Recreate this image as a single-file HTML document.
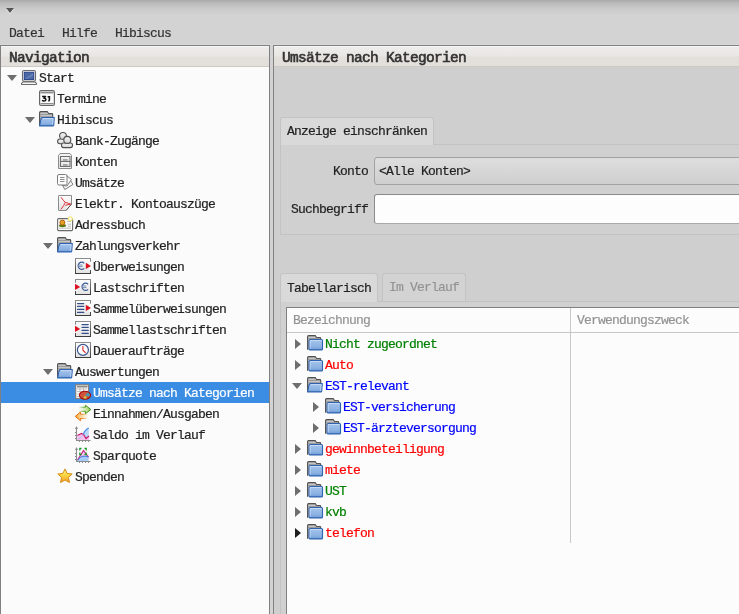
<!DOCTYPE html><html><head><meta charset="utf-8"><style>
*{margin:0;padding:0;box-sizing:border-box}
html,body{width:739px;height:614px;overflow:hidden}
body{position:relative;background:#d3d3d3;font-family:"Liberation Mono",monospace;font-size:13px;letter-spacing:-0.8px;color:#222;-webkit-text-stroke:0.2px currentColor}
.a{position:absolute}
.t{position:absolute;white-space:pre;line-height:21px;height:21px;will-change:transform}
.hd{position:absolute;white-space:pre;font-weight:normal;font-size:14.5px;letter-spacing:-0.7px;color:#333;line-height:20px;-webkit-text-stroke:0.6px #333;will-change:transform}
</style></head><body>
<svg width="0" height="0" style="position:absolute"><defs>
<linearGradient id="gb" x1="0" y1="0" x2="0" y2="1"><stop offset="0" stop-color="#a4c4ec"/><stop offset=".7" stop-color="#8cb2e2"/><stop offset="1" stop-color="#6a9ad6"/></linearGradient>
<linearGradient id="gw" x1="0" y1="0" x2="0" y2="1"><stop offset="0" stop-color="#fdfdfd"/><stop offset="1" stop-color="#e2e2e2"/></linearGradient>
<linearGradient id="gg" x1="0" y1="0" x2="1" y2="0"><stop offset="0" stop-color="#e8f4d0" stop-opacity=".2"/><stop offset="1" stop-color="#8cc83c"/></linearGradient>
<linearGradient id="go" x1="1" y1="0" x2="0" y2="0"><stop offset="0" stop-color="#fbe0a0" stop-opacity=".2"/><stop offset="1" stop-color="#f4a020"/></linearGradient>
<linearGradient id="gp" x1="0" y1="0" x2="0" y2="1"><stop offset="0" stop-color="#f6f6f6"/><stop offset="1" stop-color="#d4d4d4"/></linearGradient>
<linearGradient id="gbx" x1="0" y1="0" x2="0" y2="1"><stop offset="0" stop-color="#8c8c8c"/><stop offset="1" stop-color="#3c3c3c"/></linearGradient>
<linearGradient id="ggs" x1="0" y1="0" x2="1" y2="0"><stop offset="0" stop-color="#4a9a1a" stop-opacity="0"/><stop offset=".5" stop-color="#4a9a1a"/><stop offset="1" stop-color="#3a8a12"/></linearGradient>
<linearGradient id="gos" x1="1" y1="0" x2="0" y2="0"><stop offset="0" stop-color="#e87010" stop-opacity="0"/><stop offset=".5" stop-color="#e87010"/><stop offset="1" stop-color="#e06a10"/></linearGradient>
<linearGradient id="gs" x1="0" y1="0" x2="0" y2="1"><stop offset="0" stop-color="#fff6a0"/><stop offset=".45" stop-color="#fcd840"/><stop offset="1" stop-color="#f39a30"/></linearGradient>
</defs></svg>

<div class="a" style="left:0;top:0;width:739px;height:24px;background:linear-gradient(#a9a9a9 0,#bababa 3px,#cbcbcb 9px,#d3d3d3 15px)"></div>
<svg class="a" style="left:0;top:0" width="20" height="20"><path d="M6 9h8l-4 5z" fill="#fff" opacity=".8"/><path d="M6 8h8l-4 5z" fill="#555"/></svg>
<div class="t" style="left:9px;top:23px;color:#333">Datei</div>
<div class="t" style="left:62px;top:23px;color:#333">Hilfe</div>
<div class="t" style="left:115px;top:23px;color:#333">Hibiscus</div>
<div class="a" style="left:0;top:44px;width:739px;height:1px;background:#dadada"></div>
<div class="a" style="left:0;top:45px;width:270px;height:569px;border:1px solid #808080;border-bottom:none;background:#fbfbfb"></div>
<div class="a" style="left:1px;top:46px;width:268px;height:21px;background:linear-gradient(#f7f6f5 0,#f7f6f5 1px,#eeedeb 1px,#e9e6e3 10px,#e3e0dc 11px,#e3e0dc 20px);border-bottom:1px solid #cdc9c5"></div>
<div class="hd" style="left:9px;top:48px">Navigation</div>
<div class="a" style="left:273px;top:45px;width:470px;height:569px;border:1px solid #808080;border-bottom:none;border-right:none;background:#cfcfcf"></div>
<div class="a" style="left:274px;top:46px;width:465px;height:21px;background:linear-gradient(#f7f6f5 0,#f7f6f5 1px,#eeedeb 1px,#e9e6e3 10px,#e3e0dc 11px,#e3e0dc 20px);border-bottom:1px solid #cdc9c5"></div>
<div class="hd" style="left:282px;top:48px">Umsätze nach Kategorien</div>
<div class="a" style="left:1px;top:382px;width:268px;height:21px;background:#3a8de3"></div>
<svg class="a" style="left:7px;top:75px" width="10" height="6"><path d="M0 0h10l-5 6z" fill="#6e6e6e"/></svg>
<svg class="a" style="left:21px;top:69px;overflow:visible" width="16" height="16" viewBox="0 0 16 16"><rect x="1.5" y="1.5" width="13" height="10.8" rx="1.5" fill="#f8f8f8" stroke="#6c6c6c" stroke-width="1.1"/><rect x="3.2" y="3.2" width="9.6" height="7.4" fill="#4d68a6" stroke="#1e3a82" stroke-width=".9"/><path d="M4 9.8L12.2 4.2V6.5L6.5 9.8Z" fill="#7088bc" opacity=".8"/><path d="M2.2 12.9H13.8L15.5 14.4Q15.8 15.5 14.7 15.5H1.3Q0.2 15.5 0.5 14.4Z" fill="#f8f8f8" stroke="#6c6c6c" stroke-width="1.1" stroke-linejoin="round"/></svg>
<div class="t" style="left:39px;top:68px;color:#222">Start</div>
<svg class="a" style="left:39px;top:90px;overflow:visible" width="16" height="16" viewBox="0 0 16 16"><rect x="0.6" y="0.6" width="14.8" height="14.8" rx="1.5" fill="#fdfdfd" stroke="#666" stroke-width="1.2"/><rect x="1.5" y="1.8" width="13" height="1.6" fill="#8c8c8c"/><rect x="1.5" y="13" width="13" height="1.1" fill="#8c8c8c"/><path d="M3.1 6.6H6.5L4.9 8.3Q6.9 8.2 6.9 9.7Q6.9 11 5 11Q3.8 11 3 10.4" fill="none" stroke="#111" stroke-width="1.5" stroke-linejoin="round"/><path d="M8.6 6.8H10.4V10.1Q10.4 10.9 9.3 10.9" fill="none" stroke="#111" stroke-width="1.6"/></svg>
<div class="t" style="left:57px;top:89px;color:#222">Termine</div>
<svg class="a" style="left:25px;top:117px" width="10" height="6"><path d="M0 0h10l-5 6z" fill="#6e6e6e"/></svg>
<svg class="a" style="left:39px;top:111px;overflow:visible" width="16" height="16" viewBox="0 0 16 16"><path d="M0.6 14.8V1.6Q0.6 0.6 1.6 0.6H8.2L9.6 2.5H12.8Q13.7 2.5 13.7 3.4V7" fill="#a8a8a8" stroke="#505050" stroke-width="1.1"/><path d="M1.4 2.3h7.2M1.4 4.4h11.6M1.4 6.2h11.6" stroke="#d8d8d8" stroke-width="0.9"/><path d="M1.4 3.4h11.6M1.4 5.3h11.6" stroke="#8c8c8c" stroke-width="0.6"/><path d="M2.9 6.5H15.3L14.7 14.2Q14.6 14.9 13.9 14.9H0.6Q1.3 12 1.9 8.5Z" fill="url(#gb)" stroke="#2f62b0" stroke-width="1.1" stroke-linejoin="round"/><path d="M3.8 7.6H14.1L13.6 13.8" fill="none" stroke="#cfe0f6" stroke-width=".8"/></svg>
<div class="t" style="left:57px;top:110px;color:#222">Hibiscus</div>
<svg class="a" style="left:57px;top:132px;overflow:visible" width="16" height="16" viewBox="0 0 16 16"><rect x="0.6" y="7" width="9" height="4.8" rx="2.2" fill="url(#gp)" stroke="#4e4e4e" stroke-width="1.1"/><circle cx="6" cy="3.9" r="3.4" fill="url(#gp)" stroke="#4e4e4e" stroke-width="1.1"/><rect x="4.5" y="11" width="11" height="4.6" rx="2" fill="url(#gp)" stroke="#4e4e4e" stroke-width="1.1"/><circle cx="10.3" cy="7.9" r="3.5" fill="url(#gp)" stroke="#4e4e4e" stroke-width="1.1"/></svg>
<div class="t" style="left:75px;top:131px;color:#222">Bank-Zugänge</div>
<svg class="a" style="left:57px;top:153px;overflow:visible" width="16" height="16" viewBox="0 0 16 16"><path d="M1.5 15.5V2.5L3 0.5H13L14.5 2.5V15.5Z" fill="url(#gp)" stroke="#8a8a8a"/><path d="M2.5 14.5h11" stroke="#f4f4f4"/><rect x="3.5" y="3.5" width="9.5" height="5" fill="url(#gp)" stroke="#6e6e6e"/><rect x="3.5" y="8.5" width="9.5" height="5" fill="url(#gp)" stroke="#6e6e6e"/><path d="M5.5 5.6Q8 7.2 10.8 5.6M5.5 10.6Q8 12.2 10.8 10.6" fill="none" stroke="#fafafa" stroke-width="1.1"/><path d="M6 6.9h4.5M6 11.9h4.5" stroke="#5a5a5a" stroke-width=".9"/></svg>
<div class="t" style="left:75px;top:152px;color:#222">Konten</div>
<svg class="a" style="left:57px;top:174px;overflow:visible" width="16" height="16" viewBox="0 0 16 16"><path d="M5.5 11L7.8 15.5L16 10.5L13.5 6.5" fill="#f8f8f8" stroke="#7c7c7c" stroke-linejoin="round"/><path d="M9.5 1.5L14.5 5.5L10 12L5 11.5" fill="#f8f8f8" stroke="#7c7c7c" stroke-linejoin="round"/><rect x="0.5" y="0.5" width="9.5" height="10.5" rx="1.5" fill="#fdfdfd" stroke="#7c7c7c"/><path d="M3 3.5h4.5M3 5.5h4.5M3 7.5h4.5" stroke="#8c8c8c"/></svg>
<div class="t" style="left:75px;top:173px;color:#222">Umsätze</div>
<svg class="a" style="left:57px;top:195px;overflow:visible" width="16" height="16" viewBox="0 0 16 16"><path d="M2 .5H14.5V9L9 15.5H2Q1.5 15.5 1.5 15V1Q1.5 .5 2 .5Z" fill="url(#gw)" stroke="#8a8a8a"/><path d="M14.5 9L9.8 10.2L9 15.5Z" fill="#f8f8f8"/><path d="M14.5 9L9 15.5" stroke="#444" stroke-width=".9"/><path d="M4 2.2Q6 5.5 8.3 7.3L14 9.2M8.3 7.3Q7 10.5 4 14.3M8.3 10.3L13.5 9.2" fill="none" stroke="#d8202a" stroke-width=".9"/><path d="M5.2 2.8L6.2 4.6" stroke="#f4a0a0" stroke-width=".8"/></svg>
<div class="t" style="left:75px;top:194px;color:#222">Elektr. Kontoauszüge</div>
<svg class="a" style="left:57px;top:216px;overflow:visible" width="16" height="16" viewBox="0 0 16 16"><rect x="0.6" y="2.6" width="15" height="12" rx="1" fill="#fdfdfd" stroke="#6a6a6a" stroke-width="1.1"/><ellipse cx="5.5" cy="9.6" rx="3.6" ry="1.7" fill="#5a7a10"/><circle cx="5.4" cy="6.6" r="2.5" fill="#e0a020" stroke="#b85e10" stroke-width="1"/><path d="M9.8 5.5h4M10.5 8.2h3.5M10.5 10.2h3.5M2 12.2h12" stroke="#b8b8b8" stroke-width=".9"/><circle cx="13.3" cy="2.8" r="2" fill="#fffde8" stroke="#f2e27a" stroke-width="1.1"/></svg>
<div class="t" style="left:75px;top:215px;color:#222">Adressbuch</div>
<svg class="a" style="left:43px;top:243px" width="10" height="6"><path d="M0 0h10l-5 6z" fill="#6e6e6e"/></svg>
<svg class="a" style="left:57px;top:237px;overflow:visible" width="16" height="16" viewBox="0 0 16 16"><path d="M0.6 14.8V1.6Q0.6 0.6 1.6 0.6H8.2L9.6 2.5H12.8Q13.7 2.5 13.7 3.4V7" fill="#a8a8a8" stroke="#505050" stroke-width="1.1"/><path d="M1.4 2.3h7.2M1.4 4.4h11.6M1.4 6.2h11.6" stroke="#d8d8d8" stroke-width="0.9"/><path d="M1.4 3.4h11.6M1.4 5.3h11.6" stroke="#8c8c8c" stroke-width="0.6"/><path d="M2.9 6.5H15.3L14.7 14.2Q14.6 14.9 13.9 14.9H0.6Q1.3 12 1.9 8.5Z" fill="url(#gb)" stroke="#2f62b0" stroke-width="1.1" stroke-linejoin="round"/><path d="M3.8 7.6H14.1L13.6 13.8" fill="none" stroke="#cfe0f6" stroke-width=".8"/></svg>
<div class="t" style="left:75px;top:236px;color:#222">Zahlungsverkehr</div>
<svg class="a" style="left:75px;top:258px;overflow:visible" width="16" height="16" viewBox="0 0 16 16"><rect x="0.5" y="0.5" width="15" height="15" fill="url(#gw)" stroke="url(#gbx)"/><rect x="14" y="3.6" width="3" height="8.4" fill="#fbfbfb"/><path d="M9.2 5.3A3.5 3.6 0 1 0 9.2 10.3" fill="none" stroke="#3a5a95" stroke-width="1.2"/><path d="M3.3 7h4.2M3.3 8.6h4.2" stroke="#5a78aa" stroke-width=".8"/><path d="M10.8 4.7L16.0 7.9L10.8 11Z" fill="#dc1020"/></svg>
<div class="t" style="left:93px;top:257px;color:#222">Überweisungen</div>
<svg class="a" style="left:75px;top:279px;overflow:visible" width="16" height="16" viewBox="0 0 16 16"><rect x="0.5" y="0.5" width="15" height="15" fill="url(#gw)" stroke="url(#gbx)"/><rect x="-1" y="3.6" width="3" height="8.4" fill="#fbfbfb"/><path d="M0 4.7L5.2 7.9L0 11Z" fill="#dc1020"/><path d="M13.1 5.3A3.5 3.6 0 1 0 13.1 10.3" fill="none" stroke="#3a5a95" stroke-width="1.2"/><path d="M7.2 7h4.2M7.2 8.6h4.2" stroke="#5a78aa" stroke-width=".8"/></svg>
<div class="t" style="left:93px;top:278px;color:#222">Lastschriften</div>
<svg class="a" style="left:75px;top:300px;overflow:visible" width="16" height="16" viewBox="0 0 16 16"><rect x="0.5" y="0.5" width="15" height="15" fill="url(#gw)" stroke="url(#gbx)"/><rect x="14" y="3.6" width="3" height="8.4" fill="#fbfbfb"/><path d="M2.5 3.6h6.3M2.5 6.4h6.3M2.5 9.4h6.3M2.5 12.4h6.3" stroke="#34508a" stroke-width="1.1" stroke-linecap="round"/><path d="M10.8 4.7L16.0 7.9L10.8 11Z" fill="#dc1020"/></svg>
<div class="t" style="left:93px;top:299px;color:#222">Sammelüberweisungen</div>
<svg class="a" style="left:75px;top:321px;overflow:visible" width="16" height="16" viewBox="0 0 16 16"><rect x="0.5" y="0.5" width="15" height="15" fill="url(#gw)" stroke="url(#gbx)"/><rect x="-1" y="3.6" width="3" height="8.4" fill="#fbfbfb"/><path d="M0 4.7L5.2 7.9L0 11Z" fill="#dc1020"/><path d="M7 3.6h6.3M7 6.4h6.3M7 9.4h6.3M7 12.4h6.3" stroke="#34508a" stroke-width="1.1" stroke-linecap="round"/></svg>
<div class="t" style="left:93px;top:320px;color:#222">Sammellastschriften</div>
<svg class="a" style="left:75px;top:342px;overflow:visible" width="16" height="16" viewBox="0 0 16 16"><rect x="0.5" y="0.5" width="15" height="15" fill="url(#gw)" stroke="url(#gbx)"/><circle cx="7.9" cy="7.9" r="5.5" fill="#fdfdfd" stroke="#3a5590" stroke-width="1.2"/><path d="M7.9 4V8.2L10.6 10.9" fill="none" stroke="#e02a2a" stroke-width="1.1"/></svg>
<div class="t" style="left:93px;top:341px;color:#222">Daueraufträge</div>
<svg class="a" style="left:43px;top:369px" width="10" height="6"><path d="M0 0h10l-5 6z" fill="#6e6e6e"/></svg>
<svg class="a" style="left:57px;top:363px;overflow:visible" width="16" height="16" viewBox="0 0 16 16"><path d="M0.6 14.8V1.6Q0.6 0.6 1.6 0.6H8.2L9.6 2.5H12.8Q13.7 2.5 13.7 3.4V7" fill="#a8a8a8" stroke="#505050" stroke-width="1.1"/><path d="M1.4 2.3h7.2M1.4 4.4h11.6M1.4 6.2h11.6" stroke="#d8d8d8" stroke-width="0.9"/><path d="M1.4 3.4h11.6M1.4 5.3h11.6" stroke="#8c8c8c" stroke-width="0.6"/><path d="M2.9 6.5H15.3L14.7 14.2Q14.6 14.9 13.9 14.9H0.6Q1.3 12 1.9 8.5Z" fill="url(#gb)" stroke="#2f62b0" stroke-width="1.1" stroke-linejoin="round"/><path d="M3.8 7.6H14.1L13.6 13.8" fill="none" stroke="#cfe0f6" stroke-width=".8"/></svg>
<div class="t" style="left:75px;top:362px;color:#222">Auswertungen</div>
<svg class="a" style="left:75px;top:384px;overflow:visible" width="16" height="16" viewBox="0 0 16 16"><rect x="0.8" y="0.8" width="12.6" height="13.6" fill="#fff" stroke="#8a7a6a" stroke-width="1"/><path d="M2 2.6h10.5" stroke="#8a8a8a" stroke-width="1.8"/><path d="M2 5h10M2 7.5h10M2 10h10M2 12.5h10M5 3v10.5M8.5 3v10.5" stroke="#b8b8b8" stroke-width=".9"/><ellipse cx="10" cy="11.2" rx="5.6" ry="3.9" fill="#d0553a" stroke="#a80808" stroke-width="1.1"/><path d="M10 11.2L13 8.5L15 10.5L14 12.5Z" fill="#3aa0c0"/><path d="M10 11.2L8.3 14.6H12.2Z" fill="#c8d040"/></svg>
<div class="t" style="left:93px;top:383px;color:#fff">Umsätze nach Kategorien</div>
<svg class="a" style="left:75px;top:405px;overflow:visible" width="16" height="16" viewBox="0 0 16 16"><path d="M3.8 2.2H10.4V0.2L15.8 4.5L10.4 8.8V6.4H3.8Z" fill="url(#gg)" stroke="url(#ggs)" stroke-width="1"/><path d="M12.4 9.2H5.4V7.1L0.2 11.4L5.4 15.7V13.6H12.4Z" fill="url(#go)" stroke="url(#gos)" stroke-width="1"/></svg>
<div class="t" style="left:93px;top:404px;color:#222">Einnahmen/Ausgaben</div>
<svg class="a" style="left:75px;top:426px;overflow:visible" width="16" height="16" viewBox="0 0 16 16"><path d="M1.5 1V14.5H15.5" fill="none" stroke="#8c8c8c" stroke-width="1.1"/><path d="M0 3L1.5 0L3 3Z" fill="#8c8c8c"/><path d="M0 6.5h1.5M0 9.5h1.5M0 12.5h1.5M4.5 14.5v1.5M7.5 14.5v1.5M10.5 14.5v1.5M13.5 14.5v1.5" stroke="#8c8c8c"/><path d="M2.2 14V9.5L6.5 7.5L8.5 8.5L11 12.5L14 10V14Z" fill="#f6c0ec"/><path d="M8.3 8.3Q10 3.5 13.8 2V10L11 12.5Z" fill="#b8d6f8"/><path d="M2.4 9.5L6.5 7.5L8.5 8.5L11 12.5L14 10" fill="none" stroke="#c81e70" stroke-width="1.2"/><path d="M8.3 8.3Q10 3.5 13.8 2" fill="none" stroke="#4a8ae8" stroke-width="1.1"/><path d="M2.5 13L6 11.5L8.5 8.5" fill="none" stroke="#a8b8f0" stroke-width=".8"/></svg>
<div class="t" style="left:93px;top:425px;color:#222">Saldo im Verlauf</div>
<svg class="a" style="left:75px;top:447px;overflow:visible" width="16" height="16" viewBox="0 0 16 16"><path d="M1.5 1V14.5H15.5" fill="none" stroke="#8c8c8c" stroke-width="1.1"/><path d="M0 3L1.5 0L3 3Z" fill="#8c8c8c"/><path d="M0 6.5h1.5M0 9.5h1.5M0 12.5h1.5M4.5 14.5v1.5M7.5 14.5v1.5M10.5 14.5v1.5M13.5 14.5v1.5" stroke="#8c8c8c"/><path d="M2.5 13.5L8.5 3.5L13.5 10V14H2.5Z" fill="#f6c4ec"/><path d="M2.5 13.5Q5.5 9.5 8 9.2Q11 9 13.5 10V14H2.5Z" fill="#a8ccf8"/><path d="M2.5 13L8.5 3.5L13.5 10" fill="none" stroke="#c81e80" stroke-width="1.1"/><path d="M2.5 13.2Q5.5 9.5 8 9.2Q11 9 13.5 10" fill="none" stroke="#3a7ee8" stroke-width="1"/><path d="M4.8 3.5V1.5H6.5M9.5 1.5H11.2V3.5M4.8 5.5V7.5H6.5M9.5 7.5H11.2V5.5" fill="none" stroke="#1a9a2a" stroke-width="1.3"/></svg>
<div class="t" style="left:93px;top:446px;color:#222">Sparquote</div>
<svg class="a" style="left:57px;top:468px;overflow:visible" width="16" height="16" viewBox="0 0 16 16"><path d="M8 0.9L10.1 5.4L15.2 6L11.4 9.4L12.5 14.5L8 12L3.5 14.5L4.6 9.4L0.8 6L5.9 5.4Z" fill="url(#gs)" stroke="#d88a10" stroke-width="1" stroke-linejoin="round"/></svg>
<div class="t" style="left:75px;top:467px;color:#222">Spenden</div>
<div class="a" style="left:280px;top:144px;width:470px;height:91px;border:1px solid #c3c3c3;background:#d0d0d0"></div>
<div class="a" style="left:280px;top:117px;width:154px;height:28px;background:#d9d9d9;border:1px solid #c3c3c3;border-bottom:none;border-radius:3px 3px 0 0"></div>
<div class="t" style="left:287px;top:121px">Anzeige einschränken</div>
<div class="t" style="left:333px;top:161px">Konto</div>
<div class="a" style="left:374px;top:157px;width:380px;height:28px;border:1px solid #a2a2a2;border-radius:3px;background:linear-gradient(#dedede,#cfcfcf)"></div>
<div class="t" style="left:379px;top:161px">&lt;Alle Konten&gt;</div>
<div class="t" style="left:291px;top:199px">Suchbegriff</div>
<div class="a" style="left:374px;top:194px;width:380px;height:30px;border:1px solid #8a8a8a;border-bottom-color:#a8a8a8;border-radius:3px;background:#fdfdfd"></div>
<div class="a" style="left:280px;top:301px;width:470px;height:320px;border:1px solid #c3c3c3;background:#d0d0d0"></div>
<div class="a" style="left:280px;top:273px;width:98px;height:29px;background:#d9d9d9;border:1px solid #c3c3c3;border-bottom:none;border-radius:3px 3px 0 0"></div>
<div class="t" style="left:287px;top:278px">Tabellarisch</div>
<div class="a" style="left:382px;top:273px;width:84px;height:28px;background:#d3d3d3;border:1px solid #c3c3c3;border-bottom:none;border-radius:3px 3px 0 0"></div>
<div class="t" style="left:389px;top:277px;color:#939393">Im Verlauf</div>
<div class="a" style="left:286px;top:307px;width:460px;height:320px;border:1px solid #808080;background:#fcfcfc"></div>
<div class="a" style="left:287px;top:332px;width:460px;height:1px;background:#c8c8c8"></div>
<div class="a" style="left:570px;top:308px;width:1px;height:235px;background:#c8c8c8"></div>
<div class="t" style="left:293px;top:310px;color:#939393">Bezeichnung</div>
<div class="t" style="left:577px;top:310px;color:#939393">Verwendungszweck</div>
<svg class="a" style="left:295px;top:339px" width="6" height="10"><path d="M0 0v10l6-5z" fill="#6e6e6e"/></svg>
<svg class="a" style="left:307px;top:335px;overflow:visible" width="16" height="16" viewBox="0 0 16 16"><path d="M0.6 14.8V1.6Q0.6 0.6 1.6 0.6H8.2L9.6 2.5H12.8Q13.7 2.5 13.7 3.4V7" fill="#a8a8a8" stroke="#505050" stroke-width="1.1"/><path d="M1.4 2.3h7.2M1.4 4.4h11.6M1.4 6.2h11.6" stroke="#d8d8d8" stroke-width="0.9"/><path d="M1.4 3.4h11.6M1.4 5.3h11.6" stroke="#8c8c8c" stroke-width="0.6"/><rect x="2.1" y="4.5" width="13.4" height="10.4" rx="1" fill="url(#gb)" stroke="#3063b0" stroke-width="1.1"/><path d="M3.1 13.6V5.5H14.5" fill="none" stroke="#cfe0f6" stroke-width=".8"/></svg>
<div class="t" style="left:325px;top:334px;color:#008000">Nicht zugeordnet</div>
<svg class="a" style="left:295px;top:360px" width="6" height="10"><path d="M0 0v10l6-5z" fill="#6e6e6e"/></svg>
<svg class="a" style="left:307px;top:356px;overflow:visible" width="16" height="16" viewBox="0 0 16 16"><path d="M0.6 14.8V1.6Q0.6 0.6 1.6 0.6H8.2L9.6 2.5H12.8Q13.7 2.5 13.7 3.4V7" fill="#a8a8a8" stroke="#505050" stroke-width="1.1"/><path d="M1.4 2.3h7.2M1.4 4.4h11.6M1.4 6.2h11.6" stroke="#d8d8d8" stroke-width="0.9"/><path d="M1.4 3.4h11.6M1.4 5.3h11.6" stroke="#8c8c8c" stroke-width="0.6"/><rect x="2.1" y="4.5" width="13.4" height="10.4" rx="1" fill="url(#gb)" stroke="#3063b0" stroke-width="1.1"/><path d="M3.1 13.6V5.5H14.5" fill="none" stroke="#cfe0f6" stroke-width=".8"/></svg>
<div class="t" style="left:325px;top:355px;color:#ff0000">Auto</div>
<svg class="a" style="left:292px;top:383px" width="10" height="6"><path d="M0 0h10l-5 6z" fill="#6e6e6e"/></svg>
<svg class="a" style="left:307px;top:377px;overflow:visible" width="16" height="16" viewBox="0 0 16 16"><path d="M0.6 14.8V1.6Q0.6 0.6 1.6 0.6H8.2L9.6 2.5H12.8Q13.7 2.5 13.7 3.4V7" fill="#a8a8a8" stroke="#505050" stroke-width="1.1"/><path d="M1.4 2.3h7.2M1.4 4.4h11.6M1.4 6.2h11.6" stroke="#d8d8d8" stroke-width="0.9"/><path d="M1.4 3.4h11.6M1.4 5.3h11.6" stroke="#8c8c8c" stroke-width="0.6"/><path d="M2.9 6.5H15.3L14.7 14.2Q14.6 14.9 13.9 14.9H0.6Q1.3 12 1.9 8.5Z" fill="url(#gb)" stroke="#2f62b0" stroke-width="1.1" stroke-linejoin="round"/><path d="M3.8 7.6H14.1L13.6 13.8" fill="none" stroke="#cfe0f6" stroke-width=".8"/></svg>
<div class="t" style="left:325px;top:376px;color:#0000ff">EST-relevant</div>
<svg class="a" style="left:313px;top:402px" width="6" height="10"><path d="M0 0v10l6-5z" fill="#6e6e6e"/></svg>
<svg class="a" style="left:325px;top:398px;overflow:visible" width="16" height="16" viewBox="0 0 16 16"><path d="M0.6 14.8V1.6Q0.6 0.6 1.6 0.6H8.2L9.6 2.5H12.8Q13.7 2.5 13.7 3.4V7" fill="#a8a8a8" stroke="#505050" stroke-width="1.1"/><path d="M1.4 2.3h7.2M1.4 4.4h11.6M1.4 6.2h11.6" stroke="#d8d8d8" stroke-width="0.9"/><path d="M1.4 3.4h11.6M1.4 5.3h11.6" stroke="#8c8c8c" stroke-width="0.6"/><rect x="2.1" y="4.5" width="13.4" height="10.4" rx="1" fill="url(#gb)" stroke="#3063b0" stroke-width="1.1"/><path d="M3.1 13.6V5.5H14.5" fill="none" stroke="#cfe0f6" stroke-width=".8"/></svg>
<div class="t" style="left:343px;top:397px;color:#0000ff">EST-versicherung</div>
<svg class="a" style="left:313px;top:423px" width="6" height="10"><path d="M0 0v10l6-5z" fill="#6e6e6e"/></svg>
<svg class="a" style="left:325px;top:419px;overflow:visible" width="16" height="16" viewBox="0 0 16 16"><path d="M0.6 14.8V1.6Q0.6 0.6 1.6 0.6H8.2L9.6 2.5H12.8Q13.7 2.5 13.7 3.4V7" fill="#a8a8a8" stroke="#505050" stroke-width="1.1"/><path d="M1.4 2.3h7.2M1.4 4.4h11.6M1.4 6.2h11.6" stroke="#d8d8d8" stroke-width="0.9"/><path d="M1.4 3.4h11.6M1.4 5.3h11.6" stroke="#8c8c8c" stroke-width="0.6"/><rect x="2.1" y="4.5" width="13.4" height="10.4" rx="1" fill="url(#gb)" stroke="#3063b0" stroke-width="1.1"/><path d="M3.1 13.6V5.5H14.5" fill="none" stroke="#cfe0f6" stroke-width=".8"/></svg>
<div class="t" style="left:343px;top:418px;color:#0000ff">EST-ärzteversorgung</div>
<svg class="a" style="left:295px;top:444px" width="6" height="10"><path d="M0 0v10l6-5z" fill="#6e6e6e"/></svg>
<svg class="a" style="left:307px;top:440px;overflow:visible" width="16" height="16" viewBox="0 0 16 16"><path d="M0.6 14.8V1.6Q0.6 0.6 1.6 0.6H8.2L9.6 2.5H12.8Q13.7 2.5 13.7 3.4V7" fill="#a8a8a8" stroke="#505050" stroke-width="1.1"/><path d="M1.4 2.3h7.2M1.4 4.4h11.6M1.4 6.2h11.6" stroke="#d8d8d8" stroke-width="0.9"/><path d="M1.4 3.4h11.6M1.4 5.3h11.6" stroke="#8c8c8c" stroke-width="0.6"/><rect x="2.1" y="4.5" width="13.4" height="10.4" rx="1" fill="url(#gb)" stroke="#3063b0" stroke-width="1.1"/><path d="M3.1 13.6V5.5H14.5" fill="none" stroke="#cfe0f6" stroke-width=".8"/></svg>
<div class="t" style="left:325px;top:439px;color:#ff0000">gewinnbeteiligung</div>
<svg class="a" style="left:295px;top:465px" width="6" height="10"><path d="M0 0v10l6-5z" fill="#6e6e6e"/></svg>
<svg class="a" style="left:307px;top:461px;overflow:visible" width="16" height="16" viewBox="0 0 16 16"><path d="M0.6 14.8V1.6Q0.6 0.6 1.6 0.6H8.2L9.6 2.5H12.8Q13.7 2.5 13.7 3.4V7" fill="#a8a8a8" stroke="#505050" stroke-width="1.1"/><path d="M1.4 2.3h7.2M1.4 4.4h11.6M1.4 6.2h11.6" stroke="#d8d8d8" stroke-width="0.9"/><path d="M1.4 3.4h11.6M1.4 5.3h11.6" stroke="#8c8c8c" stroke-width="0.6"/><rect x="2.1" y="4.5" width="13.4" height="10.4" rx="1" fill="url(#gb)" stroke="#3063b0" stroke-width="1.1"/><path d="M3.1 13.6V5.5H14.5" fill="none" stroke="#cfe0f6" stroke-width=".8"/></svg>
<div class="t" style="left:325px;top:460px;color:#ff0000">miete</div>
<svg class="a" style="left:295px;top:486px" width="6" height="10"><path d="M0 0v10l6-5z" fill="#6e6e6e"/></svg>
<svg class="a" style="left:307px;top:482px;overflow:visible" width="16" height="16" viewBox="0 0 16 16"><path d="M0.6 14.8V1.6Q0.6 0.6 1.6 0.6H8.2L9.6 2.5H12.8Q13.7 2.5 13.7 3.4V7" fill="#a8a8a8" stroke="#505050" stroke-width="1.1"/><path d="M1.4 2.3h7.2M1.4 4.4h11.6M1.4 6.2h11.6" stroke="#d8d8d8" stroke-width="0.9"/><path d="M1.4 3.4h11.6M1.4 5.3h11.6" stroke="#8c8c8c" stroke-width="0.6"/><rect x="2.1" y="4.5" width="13.4" height="10.4" rx="1" fill="url(#gb)" stroke="#3063b0" stroke-width="1.1"/><path d="M3.1 13.6V5.5H14.5" fill="none" stroke="#cfe0f6" stroke-width=".8"/></svg>
<div class="t" style="left:325px;top:481px;color:#008000">UST</div>
<svg class="a" style="left:295px;top:507px" width="6" height="10"><path d="M0 0v10l6-5z" fill="#6e6e6e"/></svg>
<svg class="a" style="left:307px;top:503px;overflow:visible" width="16" height="16" viewBox="0 0 16 16"><path d="M0.6 14.8V1.6Q0.6 0.6 1.6 0.6H8.2L9.6 2.5H12.8Q13.7 2.5 13.7 3.4V7" fill="#a8a8a8" stroke="#505050" stroke-width="1.1"/><path d="M1.4 2.3h7.2M1.4 4.4h11.6M1.4 6.2h11.6" stroke="#d8d8d8" stroke-width="0.9"/><path d="M1.4 3.4h11.6M1.4 5.3h11.6" stroke="#8c8c8c" stroke-width="0.6"/><rect x="2.1" y="4.5" width="13.4" height="10.4" rx="1" fill="url(#gb)" stroke="#3063b0" stroke-width="1.1"/><path d="M3.1 13.6V5.5H14.5" fill="none" stroke="#cfe0f6" stroke-width=".8"/></svg>
<div class="t" style="left:325px;top:502px;color:#008000">kvb</div>
<svg class="a" style="left:295px;top:528px" width="6" height="10"><path d="M0 0v10l6-5z" fill="#1e1e1e"/></svg>
<svg class="a" style="left:307px;top:524px;overflow:visible" width="16" height="16" viewBox="0 0 16 16"><path d="M0.6 14.8V1.6Q0.6 0.6 1.6 0.6H8.2L9.6 2.5H12.8Q13.7 2.5 13.7 3.4V7" fill="#a8a8a8" stroke="#505050" stroke-width="1.1"/><path d="M1.4 2.3h7.2M1.4 4.4h11.6M1.4 6.2h11.6" stroke="#d8d8d8" stroke-width="0.9"/><path d="M1.4 3.4h11.6M1.4 5.3h11.6" stroke="#8c8c8c" stroke-width="0.6"/><rect x="2.1" y="4.5" width="13.4" height="10.4" rx="1" fill="url(#gb)" stroke="#3063b0" stroke-width="1.1"/><path d="M3.1 13.6V5.5H14.5" fill="none" stroke="#cfe0f6" stroke-width=".8"/></svg>
<div class="t" style="left:325px;top:523px;color:#ff0000">telefon</div>
</body></html>
